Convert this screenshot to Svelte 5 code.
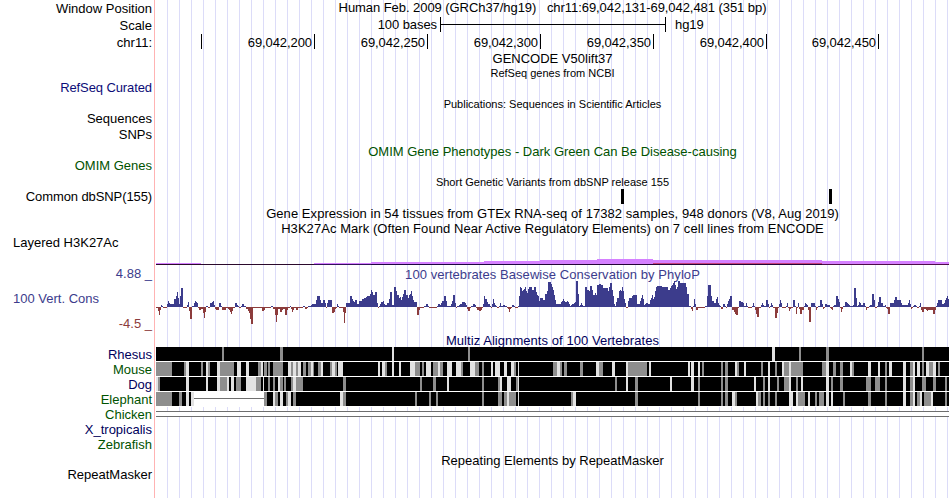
<script>
  const left = 155;
  const width = 795;

  const ticks = [
    { x: 201, text: '' },
    { x: 314, text: '69,042,200' },
    { x: 427, text: '69,042,250' },
    { x: 540, text: '69,042,300' },
    { x: 653, text: '69,042,350' },
    { x: 766, text: '69,042,400' },
    { x: 878, text: '69,042,450' }
  ];

  const snps = [621, 829];

  // x, width, top of the signal, colour of the line at the bottom
  const h3k27 = [
    [156, 45, 263, '#2b0a2b'],
    [201, 113, 264, '#2b0a2b'],
    [314, 57, 263, '#33105c'],
    [371, 113, 262, '#1d0640'],
    [484, 56, 261, '#1d0640'],
    [540, 57, 260, '#240438'],
    [597, 56, 259, '#240438'],
    [653, 169, 260, '#240438'],
    [822, 113, 261, '#4d0c4a'],
    [935, 14, 262, '#4d0c4a']
  ];

  // "width height" runs in pixels, one string per 200px of track
  const phylop = [
    [156, '2 -1,1 -4,1 -8,1 -3,1 2,1 1,4 -1,1 3,1 6,1 4,4 3,2 8,1 11,1 15,1 9,1 3,1 11,2 19,4 -1,1 2,1 5,1 -4,2 -12,2 1,1 4,1 6,1 5,1 4,1 -1,2 -3,2 -2,1 -6,1 -11,1 -5,2 1,2 -1,2 4,1 5,1 6,1 2,1 -2,3 -3,2 4,1 1,4 -3,2 -1,1 -2,1 -3,1 -5,1 -7,1 -4,2 -1,2 4,1 2,1 1,2 -1,1 1,2 3,2 1,2 -2,1 -4,1 -6,1 -12,2 -17,9 -1,2 -4,1 -3,6 -1,2 1,2 -2,1 -8,1 -15,1 -8,2 -2,2 -5,1 -3,1 -2,1 -2,2 -8,1 -3,2 -1,1 1,1 -2,1 -5,1 -3,2 -1,2 -3,5 -1,2 1,2 -2,1 -1,3 1,1 2,4 3,1 7,3 11,1 7,2 4,2 7,1 4,1 -1,1 4,4 7,2 -6,1 -5,1 -2,1 -1,1 3,1 1,4 -1,1 -5,1 -16,1 -6,4 4'],
    [350, '2 11,1 8,1 6,1 5,2 7,2 3,3 6,2 8,2 9,1 10,3 11,1 13,1 17,1 15,2 12,2 15,1 4,1 -1,1 1,1 3,2 5,1 6,1 3,2 2,2 4,1 8,2 15,2 2,2 20,1 16,2 12,1 9,1 10,1 7,1 10,1 13,2 17,2 12,1 9,1 12,1 13,1 16,1 11,1 7,3 5,2 -8,1 -3,4 -1,2 1,2 3,1 1,8 -1,1 1,2 3,1 2,1 4,2 6,2 11,1 6,4 1,1 3,1 6,2 12,1 4,1 -1,2 1,1 2,2 3,1 5,2 5,1 4,1 2,1 -2,2 -4,1 -1,1 1,1 1,2 3,1 2,1 -1,2 -3,2 -4,1 -3,1 -1,1 3,1 11,2 8,1 5,2 3,1 1,1 -1,1 3,1 8,1 4,1 2,1 1,2 -1,1 1,1 4,2 1,2 2,2 1,1 -1,1 -2,1 -5,1 -2,1 -1,2 2,1 1,3 -1,1 1,1 11,1 20,1 19,1 16,1 17,1 18,1 20,1 16,1 14,1 18,3 20,2 17,2 20,1 15,1 12,1 11,1 6,1 9,2 9,1 7,1 7,2 13,1 16,3 25'],
    [550, '1 25,1 23,1 20,1 17,1 12,1 7,5 3,1 5,1 6,1 8,1 6,2 5,1 6,1 5,1 3,1 1,1 2,2 3,1 4,1 5,2 26,1 13,1 1,1 2,1 4,1 2,2 1,2 20,2 17,1 16,2 21,1 17,2 12,1 14,1 12,2 22,2 23,2 22,5 19,1 16,1 20,2 24,1 17,1 11,1 3,1 1,1 5,2 9,1 16,1 17,1 16,1 20,1 16,1 8,1 4,2 -1,1 6,3 9,1 11,4 12,3 3,1 6,1 9,1 12,1 8,1 2,1 3,2 4,2 3,1 7,1 9,1 12,1 8,1 10,1 16,1 20,5 21,6 20,2 17,1 19,1 21,1 22,1 24,1 26,1 22,1 18,1 20,2 26,6 24,1 20,2 13,2 1,1 -2,1 -4,1 1,1 8,1 3,2 -3,7 -1,2 1,1 11,3 22,1 11,2 6,2 4,1 8,1 10,1 4,1 2,1 1,2 -2,2 3,1 1,1 -1,1 3,1 6,1 8,2 11,2 -3,1 -5,1 -7,2 -8,1 -1,2 6,2 5,1 4,2 1,1 4,1 1,2 -1'],
    [750, '2 -1,1 1,1 4,1 1,1 -3,1 -7,2 -10,2 -1,1 2,1 4,1 2,2 1,2 7,1 3,1 -1,1 1,1 4,1 2,2 -1,2 -11,1 -6,1 -1,1 3,1 7,1 4,4 -1,1 1,1 4,1 -1,1 -4,1 -2,2 -1,2 7,1 1,1 -7,1 -1,1 4,1 -2,2 -7,2 -3,1 1,1 4,1 3,1 2,1 -3,2 -15,4 4,1 1,1 -3,1 -1,2 1,2 7,1 3,1 -2,1 -1,2 3,3 2,1 -1,1 -2,1 -3,1 1,2 2,2 11,1 8,1 5,1 -1,1 -5,1 -2,2 1,2 5,1 4,1 3,1 2,3 1,1 2,2 19,1 9,1 1,1 2,1 5,1 4,2 2,2 4,1 1,1 -3,2 -1,1 1,2 2,2 13,1 7,2 -1,1 1,1 5,2 10,2 4,2 1,1 2,1 -1,1 -2,2 -7,4 4,1 7,2 10,4 7,1 4,6 2,1 4,1 7,1 3,1 -2,1 -1,1 1,2 2,1 1,2 -1,1 1,1 4,1 -3,2 -5,2 -2,1 -3,1 -4,5 -3,2 -7,1 -3,1 1,1 4,4 7,1 3,1 3,1 4,1 7,1 9,1 11,1 8']
  ];

  const bars = phylop.flatMap(([start, runs]) => {
    let x = start;
    return runs.split(',').map((run) => {
      const [w, h] = run.split(' ').map(Number);
      x += w;
      return { x: x - w, w, h };
    });
  });

  // identity marks: dark grey and light grey columns as "x width"
  const species = [
    {
      name: 'Rhesus', color: '#00005c',
      grey: '222 2,280 3,468 2,799 2,826 3,922 2',
      light: '392 2,772 3'
    },
    {
      name: 'Mouse', color: '#005200',
      grey: '156 16,184 2,201 2,208 2,220 14,258 3,264 3,268 2,273 10,291 2,296 2,303 3,308 3,313 1,318 3,330 2,335 2,385 2,415 5,422 2,433 5,440 3,461 2,475 4,482 2,514 2,553 4,560 2,564 3,580 3,599 4,628 19,702 2,721 2,725 3,737 2,761 2,775 2,784 5,791 12,822 4,833 3,840 3,852 2,885 2,910 3,922 2,929 4,938 2',
      light: '186 3,206 2,217 3,237 4,246 3,261 2,288 3,293 3,298 3,311 2,321 2,332 3,338 5,378 2,382 3,392 2,399 2,410 5,426 5,438 2,447 5,456 5,470 5,491 2,495 5,504 3,511 3,518 1,557 3,596 3,612 3,626 2,649 2,688 2,691 3,698 2,735 2,744 2,768 2,782 2,789 2,826 3,850 2,868 3,878 2,889 3,903 3,913 2,917 3,926 3,933 3'
    },
    {
      name: 'Dog', color: '#00005c',
      grey: '158 2,220 7,236 5,256 5,268 2,273 2,280 3,284 2,291 2,296 7,343 3,420 2,433 3,482 2,498 2,516 2,615 2,635 3,698 2,721 2,725 3,763 2,777 2,784 5,796 2,831 2,840 3,866 5,875 5,885 2,910 3,922 4,933 3,945 2',
      light: '156 2,186 3,206 2,217 3,227 2,231 3,246 10,263 1,278 2,293 3,447 2,500 2,507 4,518 1,626 2,670 2,691 3,754 2,768 2,789 2,801 2,826 3,903 3,913 2'
    },
    {
      name: 'Elephant', color: '#005200', gap: [194, 70],
      grey: '156 16,179 3,264 3,275 3,286 2,293 3,343 3,415 2,429 2,436 2,482 2,498 4,504 3,509 7,571 2,635 3,698 2,721 2,725 3,735 2,758 3,763 2,768 2,775 2,798 7,815 2,819 5,843 2,868 3,885 2,910 3,917 3,924 7,945 2',
      light: '186 3,191 3,273 2,280 3,288 3,340 3,507 2,518 1,573 3,732 3,756 2,789 4,796 2,808 2,826 3,831 2,903 3,913 2,920 2,931 2'
    }
  ];

  function marks(runs) {
    return runs.split(',').map((run) => run.split(' ').map(Number));
  }
</script>

{#snippet row(cls, label, title)}
  <div class="row {cls}">
    <div class="label">{label}</div>
    <div class="title">{title}</div>
  </div>
{/snippet}

<div class="browser">
  <div class="row h17">
    <div class="label">Window Position</div>
    <div class="title position">Human Feb. 2009 (GRCh37/hg19)&nbsp;&nbsp; chr11:69,042,131-69,042,481 (351 bp)</div>
  </div>

  <div class="row h17">
    <div class="label">Scale</div>
    <svg {width} height="17" viewBox="{left} 17 {width} 17">
      <text x="437" y="29" text-anchor="end">100 bases</text>
      <path d="M440 17h1v15h-1z M665 17h1v15h-1z M440 24h226v1h-226z" />
      <text x="675" y="29">hg19</text>
    </svg>
  </div>

  <div class="row h17">
    <div class="label">chr11:</div>
    <svg {width} height="17" viewBox="{left} 34 {width} 17">
      {#each ticks as tick}
        <text x={tick.x - 2} y="47" text-anchor="end">{tick.text}</text>
        <rect x={tick.x} y="34" width="1" height="15" />
      {/each}
    </svg>
  </div>

  {@render row('h15', '', 'GENCODE V50lift37')}
  {@render row('h14 small', '', 'RefSeq genes from NCBI')}
  {@render row('h17 navy high tight', 'RefSeq Curated', '')}
  {@render row('h14 small', '', 'Publications: Sequences in Scientific Articles')}
  {@render row('h15', 'Sequences', '')}
  {@render row('h18', 'SNPs', '')}
  {@render row('h14 green', '', 'OMIM Gene Phenotypes - Dark Green Can Be Disease-causing')}
  {@render row('h17 green high', 'OMIM Genes', '')}
  {@render row('h14 small', '', 'Short Genetic Variants from dbSNP release 155')}

  <div class="row h17 high tight">
    <div class="label">Common dbSNP(155)</div>
    <svg {width} height="17" viewBox="{left} 189 {width} 17">
      {#each snps as x}
        <rect {x} y="189" width="3" height="15" />
      {/each}
    </svg>
  </div>

  {@render row('h15 loose', '', 'Gene Expression in 54 tissues from GTEx RNA-seq of 17382 samples, 948 donors (V8, Aug 2019)')}
  {@render row('h15 loose', '', 'H3K27Ac Mark (Often Found Near Active Regulatory Elements) on 7 cell lines from ENCODE')}

  <div class="row signal">
    <div class="label wide">Layered H3K27Ac</div>
    <svg {width} height="31" viewBox="{left} 236 {width} 31">
      {#each h3k27 as [x, w, top, line]}
        <rect {x} y={top} width={w} height={264 - top} fill="#d580ff" />
        <rect {x} y="264" width={w} height="1" fill={line} />
      {/each}
      <rect x="653" y="263" width="169" height="1" fill="#c8407c" />
    </svg>
  </div>

  <div class="row conservation">
    <div class="label scale">
      <span class="max">4.88 _</span>
      <span class="name">100 Vert. Cons</span>
      <span class="min">-4.5 _</span>
    </div>
    <div class="plot">
      <div class="title loose">100 vertebrates Basewise Conservation by PhyloP</div>
      <svg {width} height="50" viewBox="{left} 282 {width} 50">
        {#each bars as bar}
          <rect
            x={bar.x}
            y={bar.h > 0 ? 307 - bar.h : 307}
            width={bar.w}
            height={Math.abs(bar.h)}
            fill={bar.h > 0 ? '#3c3c8c' : '#8c3c3c'}
          />
        {/each}
      </svg>
    </div>
  </div>

  {@render row('h15 low midnight loose', '', 'Multiz Alignments of 100 Vertebrates')}

  {#each species as sp}
    <div class="row h15">
      <div class="label" style="color: {sp.color}">{sp.name}</div>
      <svg {width} height="15" viewBox="{left} 0 {width} 15">
        <rect x="156" y="14" width="793" height="1" fill="#fff" />
        <rect x="156" width="793" height="14" />
        {#each marks(sp.grey) as [x, w]}
          <rect {x} width={w} height="14" fill="#8e8e8e" />
        {/each}
        {#each marks(sp.light) as [x, w]}
          <rect {x} width={w} height="14" fill="#e2e2e2" />
        {/each}
        {#if sp.gap}
          <rect x={sp.gap[0]} width={sp.gap[1]} height="14" fill="#fff" />
          <rect x={sp.gap[0]} y="6" width={sp.gap[1]} height="1" fill="#6e6e6e" />
        {/if}
      </svg>
    </div>
  {/each}

  <div class="row h15 green">
    <div class="label">Chicken</div>
    <svg {width} height="15" viewBox="{left} 407 {width} 15">
      <rect x="156" y="411" width="793" height="6" fill="#fff" />
      <path d="M156 411h793v1h-793z M156 416h793v1h-793z" fill="#6e6e6e" />
    </svg>
  </div>
  {@render row('h15 midnight', 'X_tropicalis', '')}
  {@render row('h15 green', 'Zebrafish', '')}
  {@render row('h15 low', '', 'Repeating Elements by RepeatMasker')}
  {@render row('h15', 'RepeatMasker', '')}
</div>

<style>
  :global(body) {
    margin: 0;
    background: #fff;
  }

  .browser {
    width: 950px;
    height: 498px;
    overflow: hidden;
    font: 13px/15px "Liberation Sans", Arial, sans-serif;
    color: #000;
    background:
      linear-gradient(#ffb3b3, #ffb3b3) 154px 0 / 1px 100% no-repeat,
      linear-gradient(#fff, #fff) 0 0 / 166px 100% no-repeat,
      linear-gradient(90deg, #dcdcf8 1px, transparent 1px) 167px 0 / 12px 100%;
  }

  .row {
    display: flex;
    white-space: nowrap;
  }

  .h14 {
    height: 14px;
  }

  .h15 {
    height: 15px;
  }

  .h17 {
    height: 17px;
    line-height: 17px;
  }

  .h18 {
    height: 18px;
    line-height: 17px;
  }

  .high {
    line-height: 15px;
  }

  .low {
    line-height: 17px;
  }

  .label {
    flex: none;
    box-sizing: border-box;
    width: 155px;
    padding-right: 3px;
    text-align: right;
  }

  .label.wide {
    margin-top: -1px;
    padding: 0 0 0 13px;
    text-align: left;
  }

  .title {
    flex: 1;
    text-align: center;
  }

  .position {
    line-height: 15px;
    letter-spacing: -0.06px;
  }

  svg {
    display: block;
    flex: none;
    overflow: visible;
    shape-rendering: crispEdges;
  }

  svg text {
    letter-spacing: -0.08px;
  }

  .loose {
    letter-spacing: 0.06px;
  }

  .tight {
    letter-spacing: -0.1px;
  }

  .small {
    font-size: 11px;
  }

  .navy {
    color: #0c0c78;
  }

  .midnight {
    color: #00005c;
  }

  .green {
    color: #005200;
  }

  .signal {
    height: 31px;
  }

  .conservation {
    height: 65px;
    color: #3c3c8c;
  }

  .scale {
    display: flex;
    flex-direction: column;
    height: 65px;
  }

  .scale .max {
    margin-top: -1px;
  }

  .scale .name {
    margin-top: 10px;
    padding-left: 13px;
    text-align: left;
  }

  .scale .min {
    margin-top: 10px;
    color: #8c3c3c;
  }
</style>
